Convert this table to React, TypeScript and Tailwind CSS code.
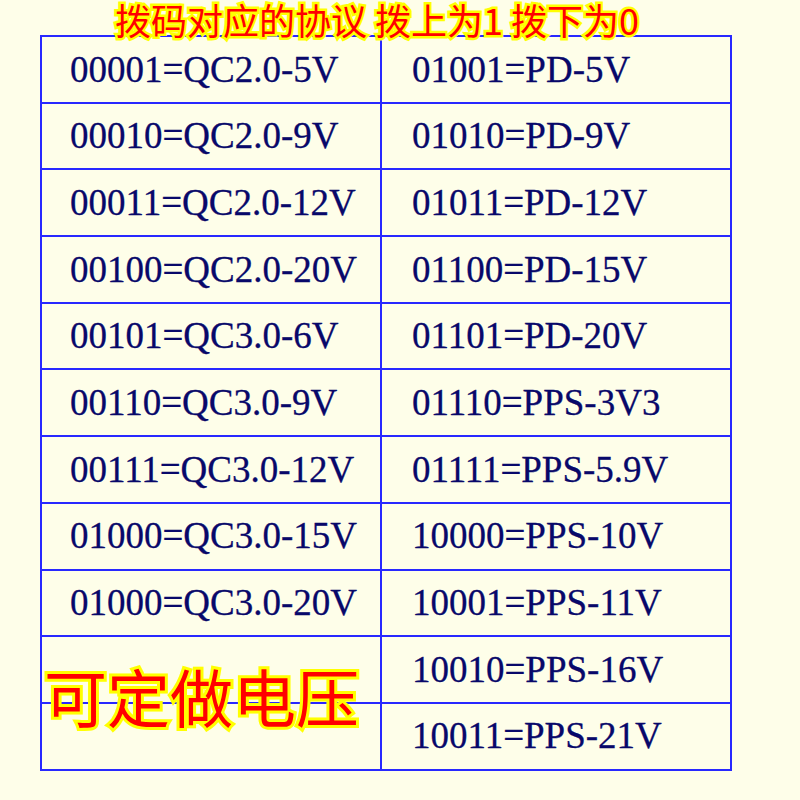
import React from "react";

const left = [
  "00001=QC2.0-5V",
  "00010=QC2.0-9V",
  "00011=QC2.0-12V",
  "00100=QC2.0-20V",
  "00101=QC3.0-6V",
  "00110=QC3.0-9V",
  "00111=QC3.0-12V",
  "01000=QC3.0-15V",
  "01000=QC3.0-20V",
  "",
  "",
];

const right = [
  "01001=PD-5V",
  "01010=PD-9V",
  "01011=PD-12V",
  "01100=PD-15V",
  "01101=PD-20V",
  "01110=PPS-3V3",
  "01111=PPS-5.9V",
  "10000=PPS-10V",
  "10001=PPS-11V",
  "10010=PPS-16V",
  "10011=PPS-21V",
];

export default function App() {
  return (
    <div className="relative w-[800px] h-[800px] overflow-hidden bg-[#fefee9]">
      <div className="pt-[35px] pl-[40px]">
        <div className="grid w-[692px] grid-cols-[338px_348px] grid-rows-[repeat(11,64.7px)] gap-[2px] p-[2px] bg-[#2828ff]">
          {left.map((l, i) => (
            <React.Fragment key={i}>
              <div className="flex items-center bg-[#fefee9] pl-[28px] text-[37px] text-[#08086a] [font-family:'Liberation_Serif',serif] whitespace-nowrap [-webkit-text-stroke:0.3px_#08086a]">
                {l}
              </div>
              <div className="flex items-center bg-[#fefee9] pl-[30px] text-[37px] text-[#08086a] [font-family:'Liberation_Serif',serif] whitespace-nowrap [-webkit-text-stroke:0.3px_#08086a]">
                {right[i]}
              </div>
            </React.Fragment>
          ))}
        </div>
      </div>

      <div className="absolute left-[115px] top-[0px] text-[36px] font-normal leading-[38px] text-[#ff0000] whitespace-nowrap [font-family:'Noto_Sans_CJK_SC',sans-serif] [-webkit-text-stroke:5px_#ffff00] [paint-order:stroke_fill]">
        拨码对应的协议 拨上为1 拨下为0
      </div>

      <div className="absolute left-[44px] top-[663px] text-[63px] font-normal leading-none text-[#ff0000] whitespace-nowrap [font-family:'Noto_Sans_CJK_SC',sans-serif] [-webkit-text-stroke:6px_#ffff00] [paint-order:stroke_fill]">
        可定做电压
      </div>
    </div>
  );
}
